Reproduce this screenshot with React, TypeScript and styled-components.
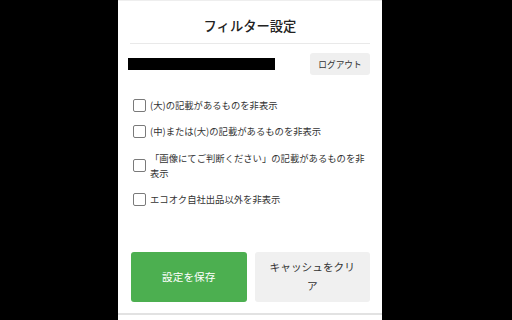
import React from "react";
import styled, { createGlobalStyle } from "styled-components";

const GlobalStyle = createGlobalStyle`
  html, body {
    margin: 0;
    padding: 0;
    background: #000;
    height: 100%;
  }
  body {
    font-family: "Noto Sans CJK JP", "Noto Sans", sans-serif;
    color: #333;
  }
  * {
    box-sizing: border-box;
  }
`;

const filters = [
  "(大)の記載があるものを非表示",
  "(中)または(大)の記載があるものを非表示",
  "「画像にてご判断ください」の記載があるものを非表示",
  "エコオク自社出品以外を非表示",
];

function App() {
  return (
    <>
      <GlobalStyle />
      <Screen>
        <Panel>
          <Title>フィルター設定</Title>
          <Divider />
          <AccountRow>
            <Redacted />
            <LogoutButton>ログアウト</LogoutButton>
          </AccountRow>
          <FilterList>
            {filters.map((label) => (
              <FilterRow key={label}>
                <Check type="checkbox" />
                <span>{label}</span>
              </FilterRow>
            ))}
          </FilterList>
          <Actions>
            <ActionButton $primary>設定を保存</ActionButton>
            <ActionButton>キャッシュをクリア</ActionButton>
          </Actions>
          <Footer />
        </Panel>
      </Screen>
    </>
  );
}

const Screen = styled.div`
  width: 512px;
  height: 320px;
  overflow: hidden;
  background: #000;
  padding-left: 118px;
`;

const Panel = styled.div`
  width: 264px;
  height: 320px;
  background: #fff;
  padding: 0 12px;
  border-top: 1px solid #eee;
  display: flex;
  flex-direction: column;
`;

const Title = styled.h1`
  margin: 0;
  padding-top: 15px;
  font-size: 13.3px;
  line-height: 20px;
  font-weight: 500;
  color: #222;
  text-align: center;
`;

const Divider = styled.div`
  height: 1px;
  margin-top: 7px;
  background: #e9e9e9;
`;

const AccountRow = styled.div`
  display: flex;
  align-items: center;
  justify-content: space-between;
  margin-top: 9px;
  height: 22px;
`;

const Redacted = styled.div`
  width: 147px;
  height: 12px;
  margin-left: -2px;
  background: #000;
`;

const LogoutButton = styled.button`
  height: 22px;
  width: 60px;
  padding: 0;
  border: none;
  border-radius: 3px;
  background: #efefef;
  color: #333;
  font-family: inherit;
  font-size: 8.7px;
`;

const FilterList = styled.div`
  display: flex;
  flex-direction: column;
  gap: 11.5px;
  margin-top: 22.5px;
  padding-left: 3px;
`;

const FilterRow = styled.label`
  display: flex;
  align-items: center;
  gap: 4px;
  font-size: 9.33px;
  line-height: 15px;
  color: #333;
`;

const Check = styled.input`
  appearance: none;
  flex: none;
  width: 13px;
  height: 13px;
  margin: 0;
  border: 1px solid #7a7a7a;
  border-radius: 2px;
  background: #fff;
`;

const Actions = styled.div`
  display: grid;
  grid-template-columns: 1fr 1fr;
  gap: 8px;
  margin-top: 45px;
  padding-left: 1px;
`;

const ActionButton = styled.button<{ $primary?: boolean }>`
  height: 50px;
  padding: 0 12px;
  border: none;
  border-radius: 3px;
  background: ${({ $primary }) => ($primary ? "#4caf50" : "#f0f0f0")};
  color: ${({ $primary }) => ($primary ? "#fff" : "#333")};
  font-family: inherit;
  font-size: 10.67px;
  line-height: 18.7px;
`;

const Footer = styled.div`
  height: 2px;
  margin: 11px -12px 0;
  background: #e2e2e2;
`;

export default App;
